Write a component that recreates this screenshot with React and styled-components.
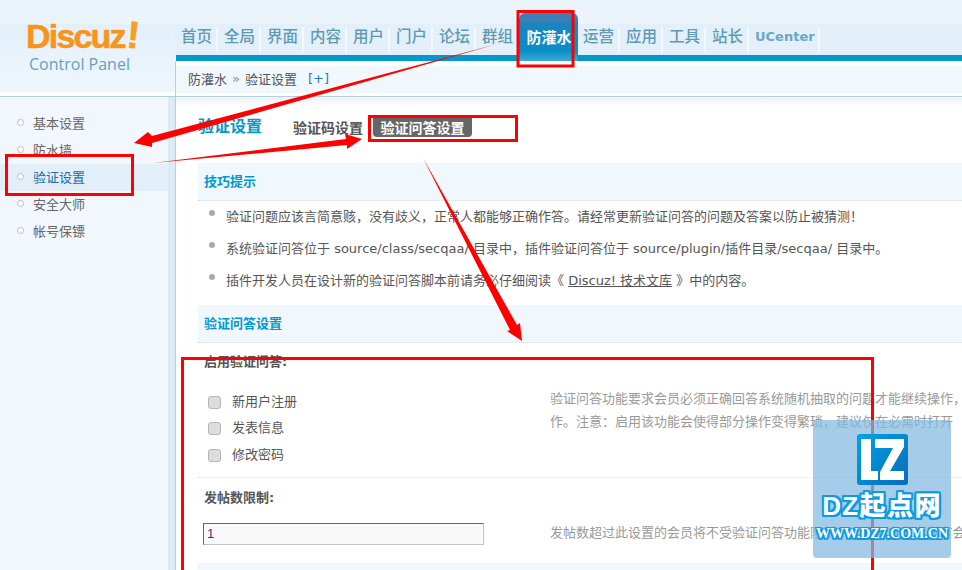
import React from "react";
import styled, { createGlobalStyle } from "styled-components";

const Global = createGlobalStyle`
  html, body { margin: 0; padding: 0; background: #fff; }
  * { box-sizing: border-box; }
`;
const CJK = `"DejaVu Sans", "Noto Sans CJK SC", sans-serif`;

const Page = styled.div`
  position: relative; width: 962px; height: 570px; overflow: hidden;
  font-family: ${CJK}; font-size: 13px; color: #555; background: #fff;
`;
const Header = styled.header`
  display: grid; grid-template-columns: 175px 1fr; height: 97px;
  background: #ebf4fb; border-bottom: 1px solid #b5d0dd;
`;
const Brand = styled.div`
  height: 92px; padding: 20px 0 0 26px;
  background: linear-gradient(#ebf4fb 0, #ebf4fb 24px, #e3f0fa 24px, #eef6fc 92px);
  display: flex; flex-direction: column;
  box-shadow: 0 4px 0 #fff;
`;
const LogoWord = styled.div`
  font: bold 34px/33px "Liberation Sans", sans-serif; letter-spacing: -1.8px;
  color: #f7941d; text-shadow: 0 0 2px #fff;
  -webkit-text-stroke: 0.6px #f7941d;
  & b { display: inline-block; font-size: 38px; line-height: 30px; color: #f9a01b; margin-left: 2px; transform: rotate(6deg); }
`;
const LogoSub = styled.div`
  font: 16px/18px "Open Sans", sans-serif; color: #6b9fb8; margin: 2px 0 0 3px;
`;
const Right = styled.div`
  display: flex; flex-direction: column; min-width: 0;
`;
const TopGap = styled.div` height: 24px; `;
const Nav = styled.nav`
  position: relative; height: 31px; background: #e3f0fa; display: flex; align-items: flex-start;
`;
const NavItem = styled.a`
  width: 43px; height: 25px; margin-top: 3px; padding: 0 0 5px 6px; flex: none;
  display: flex; align-items: center;
  border-right: 2px solid #f4f9fd;
  font-size: 15.5px; line-height: 18px; color: #5f9ab2; font-weight: 500;
`;
const NavText = styled(NavItem)`
  width: 71px; font-size: 13px; font-weight: bold; color: #6ba6c6;
`;
const ActiveTab = styled.a`
  width: 59px; height: 48px; margin: -11px -1px 0 0; padding: 0 0 2px 1px; flex: none; position: relative; z-index: 1;
  display: flex; align-items: center; justify-content: center;
  border-radius: 6px 6px 0 0;
  background: linear-gradient(#3f7db5 0, #3f7db5 8px, #1a85bf 10px, #0a8ec6 38px, #3eaad6 48px);
  color: #fff; font-size: 15px; font-weight: bold;
`;
const Bar = styled.div` height: 6px; background: #0099cc; border-left: 1px solid #fff; `;
const CrumbWrap = styled.div`
  flex: 1; background: #fff; border-left: 1px solid #b5d0dd; padding: 5px 0 3px 0;
`;
const Crumb = styled.div`
  height: 27px; background: #f0f7fd; padding: 0 0 2px 12px; display: flex; align-items: center; gap: 5px;
  color: #555; font-size: 13px;
  & em { font-style: normal; color: #7c97b0; }
  & a { color: #2a78b0; margin-left: 6px; }
`;
const Body = styled.div`
  display: grid; grid-template-columns: 176px 1fr; height: 473px;
`;
const Side = styled.aside`
  background: #f1f7fd; border-right: 1px solid #b5d0dd;
  padding-top: 13px; display: flex; flex-direction: column;
  box-shadow: inset -7px 0 0 #dcecf7;
`;
const SideItem = styled.a`
  height: 27px; width: 168px; display: flex; align-items: center; gap: 9px; padding: 0 0 2px 17px;
  background: ${p => (p.$on ? "#e2eff9" : "transparent")};
  color: ${p => (p.$on ? "#2369a8" : "#666")};
  font-size: 13px;
`;
const Dot = styled.i`
  width: 7px; height: 7px; border-radius: 50%; background: #fff; border: 1px solid #bbb; flex: none;
`;
const Main = styled.main`
  background: linear-gradient(#eaf3f8 0, #fff 10px);
  padding: 18px 0 0 22px; min-width: 0; white-space: nowrap;
`;
const TabsRow = styled.div`
  display: flex; align-items: center; height: 26px; padding-bottom: 2px; margin-bottom: 22px;
`;
const PageTitle = styled.h1`
  margin: 0; width: 95px; font-size: 16px; line-height: 24px; font-weight: bold; color: #0099cc;
`;
const Tab = styled.a`
  font-size: 14px; font-weight: bold; color: #555; margin-right: 10px;
`;
const PillTab = styled(Tab)`
  background: #666; color: #fff; border-radius: 0 0 4px 4px; height: 19px; width: 99px; margin: 0;
  display: flex; align-items: center; justify-content: center;
`;
const Section = styled.div`
  height: 38px; background: #f0f7fd; border-bottom: 1px dotted #cfdfe8;
  padding: 0 0 3px 6px; display: flex; align-items: center;
  font-size: 13px; font-weight: bold; color: #0099cc;
`;
const TipList = styled.ul`
  list-style: none; margin: 0; padding: 0; height: 104px;
`;
const Tip = styled.li`
  height: 32px; display: flex; align-items: center; gap: 11px; padding: 0 0 4px 11px;
  font-size: 13px; color: #555;
  & a { color: #555; text-decoration: underline; }
`;
const Bullet = styled.i`
  width: 6px; height: 6px; border-radius: 50%; background: #aaa; flex: none; position: relative; top: -2px;
`;
const Label = styled.div`
  font-size: 13px; font-weight: bold; color: #555; padding-left: 6px; line-height: 16px;
  margin-top: ${p => p.$top}px;
`;
const Row = styled.div`
  display: grid; grid-template-columns: 352px 1fr; margin-top: ${p => p.$top || 0}px;
`;
const Checks = styled.div`
  padding: 17px 0 0 10px; display: flex; flex-direction: column;
`;
const Check = styled.label`
  height: 26.5px; display: flex; align-items: center; gap: 11px; font-size: 13px; color: #555;
`;
const Box = styled.i`
  width: 13px; height: 13px; margin-top: 4px; border-radius: 3px; background: #ddd; border: 1px solid #b5b5b5; flex: none;
`;
const Note = styled.div`
  font-size: 13px; line-height: 23px; color: #999;
  margin-top: ${p => p.$top || 0}px;
`;
const Divider = styled.div`
  border-top: 1px dotted #d8e6ef; margin-top: 10px; height: 13px;
`;
const Input = styled.input`
  width: 281px; height: 22px; margin-left: 5px; padding: 0 3px; font: 13px "Liberation Sans", sans-serif; color: #4b2a7a;
  background: #f9f9f9; border: 1px solid #c4c4c4; border-top-color: #666; border-left-color: #666; outline: none; display: block;
`;
const NextSection = styled.div`
  height: 30px; background: #f0f7fd; margin-top: 18px;
`;
const Mark = styled.div`
  position: absolute; left: 813px; top: 420px; width: 138px; height: 138px; border-radius: 4px;
  background: rgba(130,186,224,0.72); display: flex; flex-direction: column; align-items: center; padding-top: 14px; z-index: 3;
`;
const MarkTitle = styled.div`
  margin-top: 8px; font: 900 26px/26px "Liberation Sans", "Noto Sans CJK SC", sans-serif; color: #fff; letter-spacing: 1.4px; white-space: nowrap;
  text-shadow: 2px 0 0 #0a9be0, -2px 0 0 #0a9be0, 0 2px 0 #0a9be0, 0 -2px 0 #0a9be0, 2px 2px 0 #0a9be0, -2px -2px 0 #0a9be0, 2px -2px 0 #0a9be0, -2px 2px 0 #0a9be0;
`;
const MarkUrl = styled.div`
  margin-top: 7px; font: bold 14px/15px "Liberation Serif", serif; color: #fff; white-space: nowrap;
  text-shadow: 1.5px 0 0 #0a9be0, -1.5px 0 0 #0a9be0, 0 1.5px 0 #0a9be0, 0 -1.5px 0 #0a9be0, 1.5px 1.5px 0 #0a9be0, -1.5px -1.5px 0 #0a9be0, 1.5px -1.5px 0 #0a9be0, -1.5px 1.5px 0 #0a9be0;
`;
const Overlay = styled.svg`
  position: absolute; left: 0; top: 0; width: 962px; height: 570px; pointer-events: none; z-index: 2;
`;

const NAV = ["首页", "全局", "界面", "内容", "用户", "门户", "论坛", "群组"];
const NAV2 = ["运营", "应用", "工具", "站长"];
const SIDE = ["基本设置", "防水墙", "验证设置", "安全大师", "帐号保镖"];

export default function App() {
  return (
    <Page>
      <Global />
      <Header>
        <Brand>
          <LogoWord>Discuz<b>!</b></LogoWord>
          <LogoSub>Control Panel</LogoSub>
        </Brand>
        <Right>
          <TopGap />
          <Nav>
            {NAV.map(n => <NavItem key={n}>{n}</NavItem>)}
            <ActiveTab>防灌水</ActiveTab>
            {NAV2.map(n => <NavItem key={n}>{n}</NavItem>)}
            <NavText>UCenter</NavText>
          </Nav>
          <Bar />
          <CrumbWrap>
            <Crumb>防灌水 <em>»</em> 验证设置 <a>[+]</a></Crumb>
          </CrumbWrap>
        </Right>
      </Header>
      <Body>
        <Side>
          {SIDE.map((s, i) => (
            <SideItem key={s} $on={i === 2}><Dot />{s}</SideItem>
          ))}
        </Side>
        <Main>
          <TabsRow>
            <PageTitle>验证设置</PageTitle>
            <Tab>验证码设置</Tab>
            <PillTab>验证问答设置</PillTab>
          </TabsRow>
          <Section>技巧提示</Section>
          <TipList>
            <Tip><Bullet /><span>验证问题应该言简意赅，没有歧义，正常人都能够正确作答。请经常更新验证问答的问题及答案以防止被猜测！</span></Tip>
            <Tip><Bullet /><span>系统验证问答位于 source/class/secqaa/ 目录中，插件验证问答位于 source/plugin/插件目录/secqaa/ 目录中。</span></Tip>
            <Tip><Bullet /><span>插件开发人员在设计新的验证问答脚本前请务必仔细阅读《 <a>Discuz! 技术文库</a> 》中的内容。</span></Tip>
          </TipList>
          <Section>验证问答设置</Section>
          <Label $top={11}>启用验证问答:</Label>
          <Row>
            <Checks>
              <Check><Box />新用户注册</Check>
              <Check><Box />发表信息</Check>
              <Check><Box />修改密码</Check>
            </Checks>
            <Note $top={17}>
              验证问答功能要求会员必须正确回答系统随机抽取的问题才能继续操作，<br />
              作。注意：启用该功能会使得部分操作变得繁琐，建议仅在必需时打开
            </Note>
          </Row>
          <Divider />
          <Label $top={0}>发帖数限制:</Label>
          <Row $top={17}>
            <Input defaultValue="1" readOnly />
            <Note $top={-2}>发帖数超过此设置的会员将不受验证问答功能限制，0 或留空代表所有会员都受</Note>
          </Row>
          <NextSection />
        </Main>
      </Body>
      <Overlay viewBox="0 0 962 570">
        <g fill="none" stroke="#f00" strokeWidth="3">
          <rect x="518" y="11.5" width="55" height="54.5" />
          <rect x="369.5" y="116.5" width="147" height="24" />
          <rect x="6.5" y="155.5" width="126" height="39" />
          <rect x="182.5" y="358.5" width="690" height="230" />
        </g>
        <g fill="#f00">
          <polygon points="497,44 152,136 148,132 134,143 152,147 152,143" />
          <polygon points="153,163 346,139 345,134 362,139 347,149 347,145" />
          <polygon points="423,158 510,330 507,331 522,341 520,323 517,325" />
        </g>
      </Overlay>
      <Mark>
        <svg width="51" height="51" viewBox="0 0 51 51" aria-hidden="true">
          <defs>
            <linearGradient id="lz" x1="0" y1="0" x2="1" y2="1">
              <stop offset="0" stopColor="#00a3e8" />
              <stop offset="1" stopColor="#0a6cb5" />
            </linearGradient>
          </defs>
          <rect width="51" height="51" rx="3" fill="url(#lz)" />
          <path d="M4 5H14V37H21V46H4Z" fill="#fff" />
          <path d="M18 5H47V13L33 37H47V46H23V38L36 14H18Z" fill="#fff" />
        </svg>
        <MarkTitle>DZ起点网</MarkTitle>
        <MarkUrl>WWW.DZ7.COM.CN</MarkUrl>
      </Mark>
    </Page>
  );
}
